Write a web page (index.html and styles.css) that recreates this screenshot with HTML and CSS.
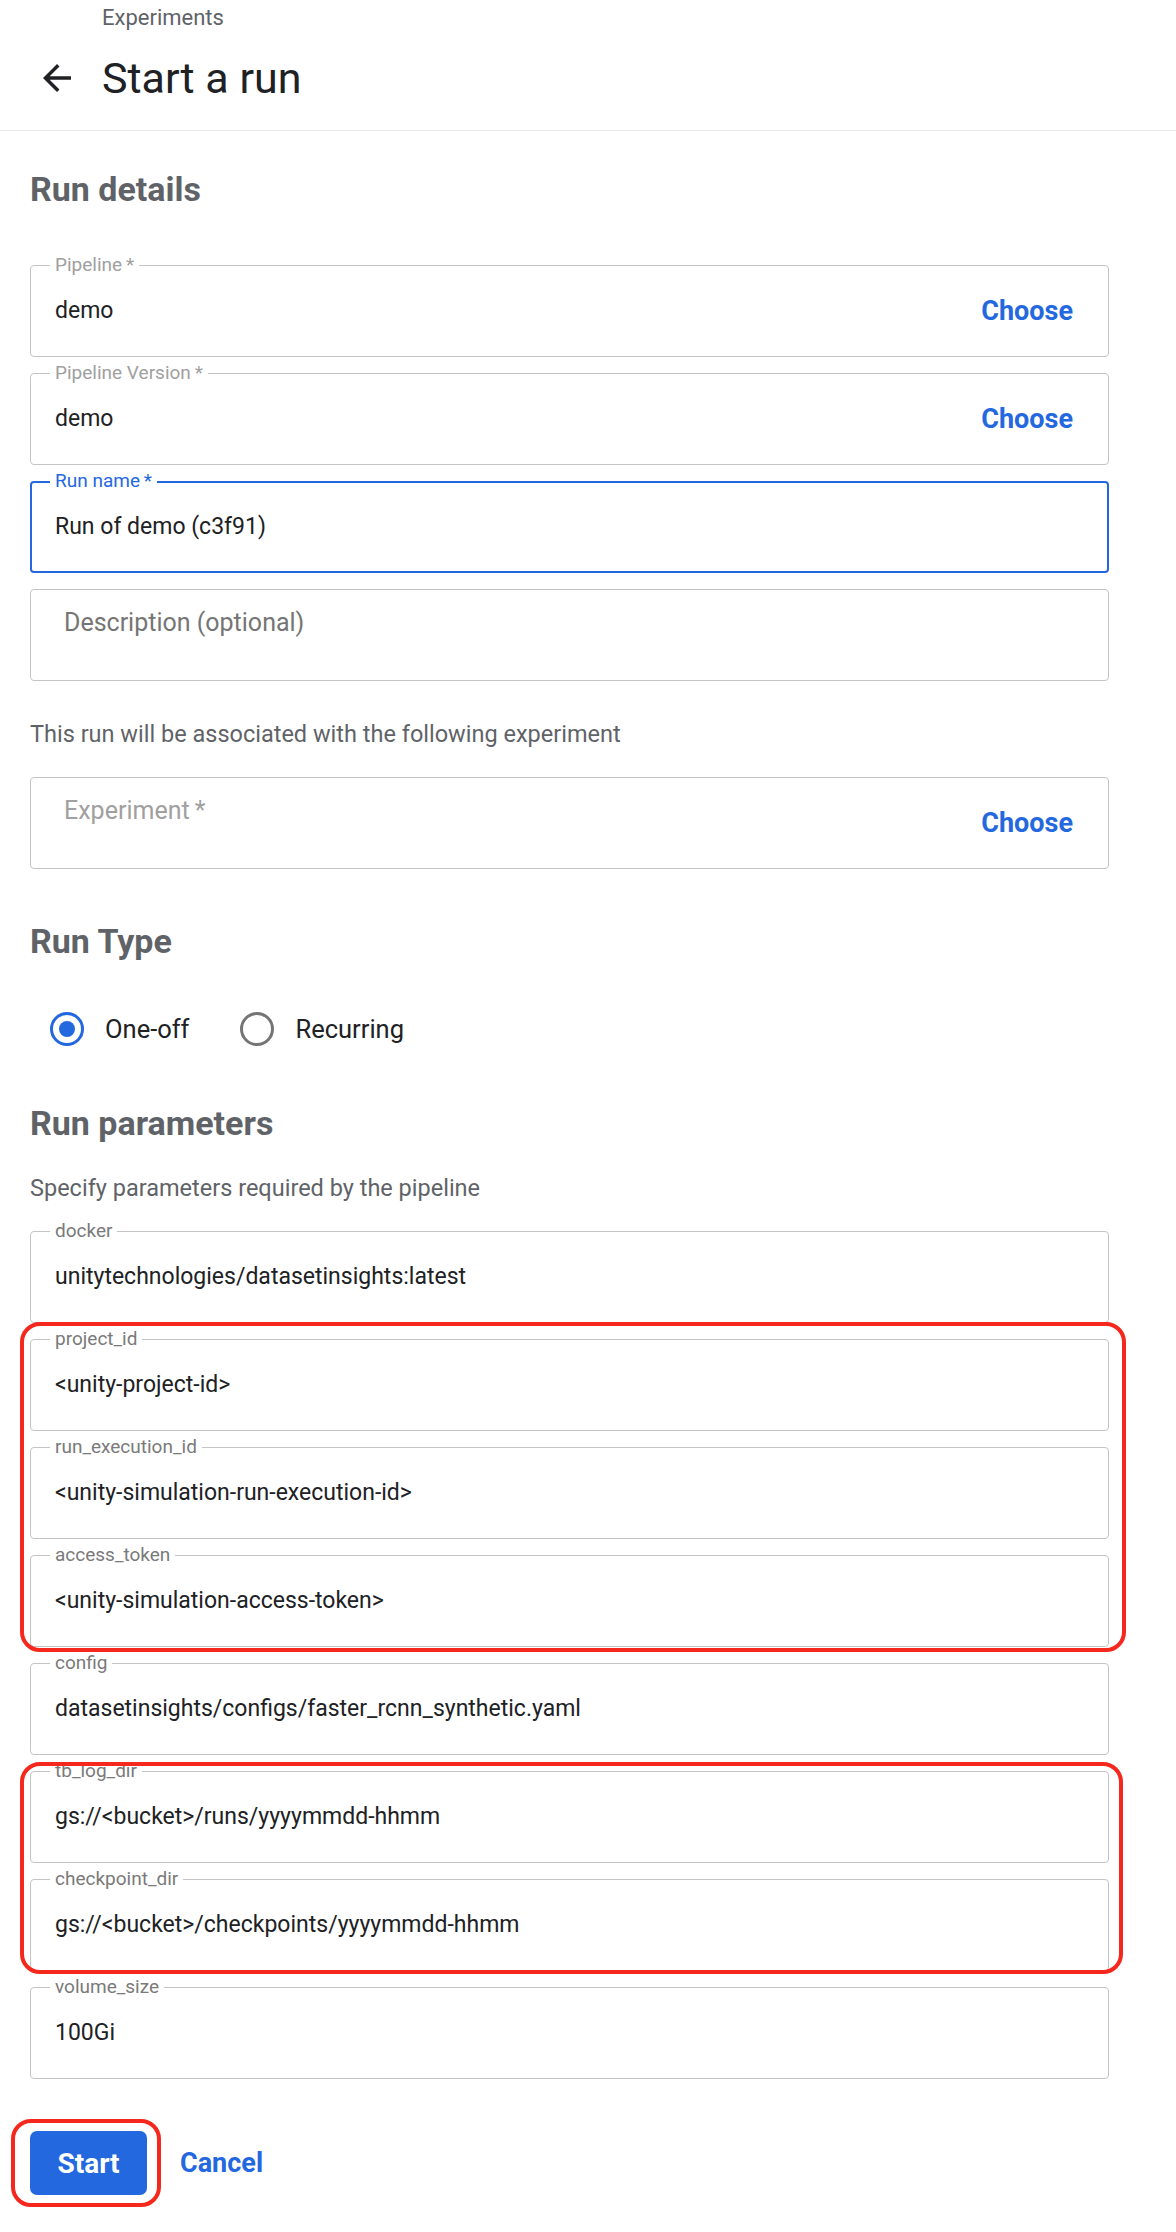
FILE: index.html
```html
<!DOCTYPE html>
<html lang="en">
<head>
    <meta charset="UTF-8">
    <meta name="viewport" content="width=device-width, initial-scale=1.0">
    <title>Start a run - Experiments</title>
    <link rel="stylesheet" href="styles.css">
</head>
<body>
    <header class="page-header">
        <div class="breadcrumb">Experiments</div>
        <div class="title-row">
            <button class="back-btn" type="button" aria-label="Back">
                <svg viewBox="0 0 24 24" width="42" height="42">
                    <path d="M20 11H7.83l5.59-5.59L12 4l-8 8 8 8 1.41-1.41L7.83 13H20v-2z" fill="#202124"/>
                </svg>
            </button>
            <h1 class="page-title">Start a run</h1>
        </div>
    </header>

    <main class="content">
        <h2 class="section-title first">Run details</h2>

        <div class="field-list details">
            <div class="field is-disabled">
                <span class="field-label">Pipeline&thinsp;*</span>
                <span class="field-value">demo</span>
                <button class="choose-btn" type="button">Choose</button>
            </div>
            <div class="field is-disabled">
                <span class="field-label">Pipeline Version&thinsp;*</span>
                <span class="field-value">demo</span>
                <button class="choose-btn" type="button">Choose</button>
            </div>
            <div class="field is-focused">
                <span class="field-label">Run name&thinsp;*</span>
                <span class="field-value">Run of demo (c3f91)</span>
            </div>
            <div class="field">
                <span class="field-placeholder">Description (optional)</span>
            </div>
        </div>

        <p class="hint experiment-hint">This run will be associated with the following experiment</p>

        <div class="field experiment-field">
            <span class="field-placeholder is-muted">Experiment&thinsp;*</span>
            <span class="field-value"></span>
            <button class="choose-btn" type="button">Choose</button>
        </div>

        <h2 class="section-title run-type">Run Type</h2>

        <div class="radio-group">
            <label class="radio checked">
                <svg viewBox="0 0 36 36" width="36" height="36">
                    <circle cx="18" cy="18" r="15.5" fill="none" stroke="#2468e0" stroke-width="3"/>
                    <circle cx="18" cy="18" r="8" fill="#2468e0"/>
                </svg>
                <span>One-off</span>
            </label>
            <label class="radio">
                <svg viewBox="0 0 36 36" width="36" height="36">
                    <circle cx="18" cy="18" r="15.5" fill="none" stroke="#757575" stroke-width="3"/>
                </svg>
                <span>Recurring</span>
            </label>
        </div>

        <h2 class="section-title run-params">Run parameters</h2>
        <p class="hint params-hint">Specify parameters required by the pipeline</p>

        <div class="field-list params">
            <div class="field">
                <span class="field-label">docker</span>
                <span class="field-value">unitytechnologies/datasetinsights:latest</span>
            </div>

            <div class="field-list highlight hl-creds">
                <div class="field">
                    <span class="field-label">project_id</span>
                    <span class="field-value">&lt;unity-project-id&gt;</span>
                </div>
                <div class="field">
                    <span class="field-label">run_execution_id</span>
                    <span class="field-value">&lt;unity-simulation-run-execution-id&gt;</span>
                </div>
                <div class="field">
                    <span class="field-label">access_token</span>
                    <span class="field-value">&lt;unity-simulation-access-token&gt;</span>
                </div>
            </div>

            <div class="field">
                <span class="field-label">config</span>
                <span class="field-value">datasetinsights/configs/faster_rcnn_synthetic.yaml</span>
            </div>

            <div class="field-list highlight hl-dirs">
                <div class="field">
                    <span class="field-label">tb_log_dir</span>
                    <span class="field-value">gs://&lt;bucket&gt;/runs/yyyymmdd-hhmm</span>
                </div>
                <div class="field">
                    <span class="field-label">checkpoint_dir</span>
                    <span class="field-value">gs://&lt;bucket&gt;/checkpoints/yyyymmdd-hhmm</span>
                </div>
            </div>

            <div class="field">
                <span class="field-label">volume_size</span>
                <span class="field-value">100Gi</span>
            </div>
        </div>

        <div class="actions">
            <span class="highlight hl-start">
                <button class="btn-primary" type="button">Start</button>
            </span>
            <button class="btn-text" type="button">Cancel</button>
        </div>
    </main>
</body>
</html>
```

FILE: styles.css
```css
:root {
    --text-color: #202124;
    --secondary-color: #5f6368;
    --border-color: #c4c4c4;
    --label-color: #7a7a7a;
    --disabled-color: #a0a0a0;
    --primary-color: #2468e0;
    --mark-color: #f5281e;
}

* {
    box-sizing: border-box;
    margin: 0;
    padding: 0;
}

body {
    font-family: Roboto, 'Noto Sans', Arial, sans-serif;
    color: var(--text-color);
    background: #fff;
}

button {
    font-family: inherit;
    border: none;
    background: none;
    cursor: pointer;
}

/* header */
.page-header {
    height: 131px;
    border-bottom: 1px solid #e8eaed;
}

.breadcrumb {
    padding: 5px 0 0 102px;
    font-size: 22px;
    line-height: 26px;
    color: var(--secondary-color);
}

.title-row {
    display: flex;
    align-items: center;
    height: 50px;
    margin-top: 22px;
}

.back-btn {
    display: flex;
    width: 42px;
    height: 42px;
    margin-left: 36px;
}

.page-title {
    margin-left: 24px;
    font-size: 43px;
    line-height: 50px;
    font-weight: 400;
}

/* body */
.content {
    padding: 0 67px 40px 30px;
}

.section-title {
    font-size: 34px;
    line-height: 40px;
    font-weight: 700;
    color: var(--secondary-color);
}

.section-title.first { margin-top: 38px; }
.section-title.run-type { margin-top: 52px; }
.section-title.run-params { margin-top: 50px; }

.hint {
    font-size: 23.5px;
    line-height: 28px;
    color: var(--secondary-color);
}

.experiment-hint { margin-top: 39px; }
.params-hint { margin-top: 31px; }

.field-list {
    display: flex;
    flex-direction: column;
    gap: 16px;
}

.field-list.details { margin-top: 56px; }
.field-list.params { margin-top: 29px; }

.field {
    position: relative;
    display: flex;
    align-items: center;
    height: 92px;
    padding: 0 27px 0 24px;
    border: 1px solid var(--border-color);
    border-radius: 4px;
}

.field.is-focused {
    border: 2px solid var(--primary-color);
    padding-left: 23px;
}

.experiment-field { margin-top: 29px; }

.field-label {
    position: absolute;
    top: -11px;
    left: 19px;
    padding: 0 5px;
    background: #fff;
    font-size: 19px;
    line-height: 20px;
    color: var(--label-color);
    white-space: nowrap;
}

.field.is-disabled .field-label { color: var(--disabled-color); }

.field.is-focused .field-label {
    top: -12px;
    left: 18px;
    color: var(--primary-color);
}

.field-placeholder {
    position: absolute;
    top: 19px;
    left: 33px;
    font-size: 25px;
    line-height: 28px;
    color: #757575;
}

.field-placeholder.is-muted { color: var(--disabled-color); }

.field-value {
    flex: 1;
    font-size: 23px;
    line-height: 30px;
    white-space: nowrap;
}

.choose-btn {
    padding: 8px;
    font-size: 27px;
    font-weight: 700;
    color: var(--primary-color);
}

/* run type */
.radio-group {
    display: flex;
    align-items: center;
    height: 48px;
    margin-top: 44px;
    padding-left: 19px;
}

.radio {
    display: flex;
    align-items: center;
    gap: 20px;
    font-size: 25.5px;
    margin-right: 50px;
}

.radio svg { flex: none; }

/* highlighted groups */
.highlight { position: relative; }

.highlight::after {
    content: "";
    position: absolute;
    border: 4px solid var(--mark-color);
    border-radius: 20px;
    pointer-events: none;
}

.hl-creds::after { top: -17px; bottom: -5px; left: -10px; right: -17px; }
.hl-dirs::after { top: -9px; bottom: -3px; left: -10px; right: -14px; }
.hl-start::after { top: -12px; bottom: -12px; left: -19px; right: -14px; }

/* actions */
.actions {
    display: flex;
    align-items: center;
    margin-top: 52px;
}

.hl-start { display: flex; }

.btn-primary {
    width: 117px;
    height: 64px;
    border-radius: 7px;
    background: var(--primary-color);
    color: #fff;
    font-size: 28px;
    font-weight: 700;
}

.btn-text {
    margin-left: 33px;
    font-size: 27px;
    font-weight: 700;
    color: var(--primary-color);
}
```
